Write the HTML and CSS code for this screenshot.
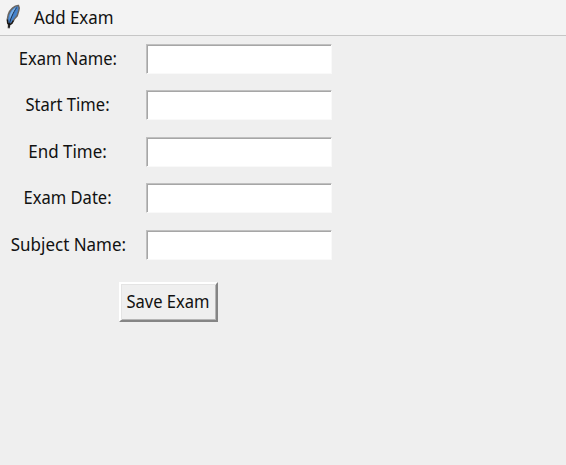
FILE: index.html
```html
<!DOCTYPE html>
<html lang="en">
<head>
<meta charset="utf-8">
<title>Add Exam</title>
<link rel="stylesheet" href="styles.css">
</head>
<body>
<header class="titlebar">
  <svg class="feather" viewBox="0 0 16 25" width="16" height="25" aria-hidden="true">
    <path d="M13.2 1.6C9.5 1.5 5 5.4 3.3 10.4c-.9 2.8-1.2 5.8-.7 8.4l1 1.5-.2 3.2.8.1.6-3.3 2.2-1.2 2.3-4 2.9-3.3 1.5-4.9c.7-2 .5-4.2-.2-5.3z" fill="#4583cc" stroke="#6a6662" stroke-width="1.5"/>
    <path d="M11.8 3.3C8.5 4 5.5 8 4.6 12l.1 3.2L11.8 3.3z" fill="#79b0e8"/>
    <path d="M11.6 3.5C8.3 8.8 5 14.6 3.9 23.4" fill="none" stroke="#1c2e48" stroke-width="1"/>
    <path d="M2.4 15.5l.5 4 1.3 1.3 2.4-1.3 1.8-3M4 19v4.6" fill="none" stroke="#171513" stroke-width="1.4"/>
  </svg>
  <h1 class="title">Add Exam</h1>
</header>
<form class="form">
  <label class="label" for="name"><span>Exam Name:</span></label><input class="entry" id="name">
  <label class="label" for="start"><span>Start Time:</span></label><input class="entry" id="start">
  <label class="label" for="end"><span class="wide">End Time:</span></label><input class="entry" id="end">
  <label class="label" for="date"><span>Exam Date:</span></label><input class="entry" id="date">
  <label class="label" for="subject"><span class="wide">Subject Name:</span></label><input class="entry" id="subject">
</form>
<button class="save" type="button"><span>Save Exam</span></button>
</body>
</html>
```
FILE: styles.css
```css
* { box-sizing: border-box; }
body {
  margin: 0;
  height: 465px;
  overflow: hidden;
  background: #efefef;
  color: #111;
  font-family: "Noto Sans", "Open Sans", sans-serif;
  font-size: 17.5px;
}
.titlebar {
  display: flex;
  align-items: center;
  height: 36px;
  padding-left: 5px;
  background: #f3f3f3;
  border-bottom: 1px solid #c6c6c6;
}
.feather { margin-top: -3px; }
.title {
  margin: -1px 0 0 13px;
  font-size: 17.5px;
  font-weight: 400;
  line-height: 24px;
  transform: scaleX(.965);
  transform-origin: left;
}
.form {
  display: grid;
  grid-template-columns: 136px 196px;
  grid-auto-rows: 46.5px;
  padding-top: 7.5px;
}
.label {
  height: 30px;
  line-height: 28px;
  text-align: center;
  white-space: nowrap;
}
.label span, .save span {
  display: inline-block;
  transform: scaleX(.945);
}
.label .wide { transform: scaleX(.97); }
.entry {
  width: 186px;
  height: 30px;
  margin: 0 0 0 10px;
  padding: 0 4px;
  background: #fff;
  border: 1px solid #c0c0c0;
  border-right-color: #f9f9f9;
  border-bottom-color: #f9f9f9;
  border-radius: 0;
  box-shadow: inset 1px 1px #a6a6a6;
  outline: 0;
  font: inherit;
}
.save {
  display: flex;
  align-items: center;
  justify-content: center;
  width: 99px;
  height: 40px;
  margin: 6px 0 0 119px;
  padding: 0 1px 2px 0;
  background: #efefef;
  border: 2px solid #fff;
  border-right-color: #858585;
  border-bottom-color: #858585;
  box-shadow: inset 1px 1px #e4e4e4, inset -1px -1px #b5b5b5;
  color: #111;
  font: inherit;
  white-space: nowrap;
}
```
